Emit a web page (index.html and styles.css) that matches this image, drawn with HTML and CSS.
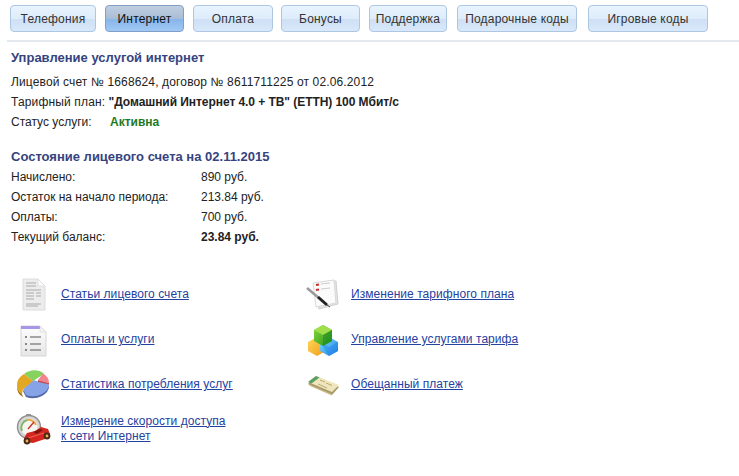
FILE: index.html
```html
<!DOCTYPE html>
<html lang="ru">
<head>
    <meta charset="UTF-8">
    <meta name="viewport" content="width=device-width, initial-scale=1.0">
    <title>Управление услугой интернет</title>
    <link rel="stylesheet" href="styles.css">
</head>
<body>
    <nav class="tabs">
        <a href="#" class="tab tab-phone">Телефония</a>
        <a href="#" class="tab tab-net active">Интернет</a>
        <a href="#" class="tab tab-pay">Оплата</a>
        <a href="#" class="tab tab-bonus">Бонусы</a>
        <a href="#" class="tab tab-help">Поддержка</a>
        <a href="#" class="tab tab-gift">Подарочные коды</a>
        <a href="#" class="tab tab-game">Игровые коды</a>
    </nav>

    <main class="content">
        <h1 class="title">Управление услугой интернет</h1>
        <p class="line line-account">Лицевой счет № 1668624, договор № 8611711225 от 02.06.2012</p>
        <p class="line"><span class="plan-label">Тарифный план:</span> <b class="plan-name">"Домашний Интернет 4.0 + ТВ" (ETTH) 100 Мбит/с</b></p>
        <p class="line status"><span class="status-label">Статус услуги:</span><b class="status-on">Активна</b></p>

        <h2 class="title title-balance">Состояние лицевого счета на 02.11.2015</h2>
        <dl class="balance">
            <dt>Начислено:</dt><dd>890 руб.</dd>
            <dt>Остаток на начало периода:</dt><dd>213.84 руб.</dd>
            <dt>Оплаты:</dt><dd>700 руб.</dd>
            <dt>Текущий баланс:</dt><dd><b>23.84 руб.</b></dd>
        </dl>
    </main>

    <div class="services">
        <div class="service">
            <svg class="icon" viewBox="0 0 36 36">
                <path d="M7 2h15l7 7v24H7z" fill="#ececec" stroke="#dcdcdc"/>
                <path d="M22 2l7 7h-7z" fill="#fafafa" stroke="#d8d8d8" stroke-width=".6"/>
                <path d="M10 6h10M10 9h10M10 13h15M10 16h8M20 16h5M10 19h8M20 19h5M10 22h8M10 27h15M10 29h12" stroke="#a9a9a9" stroke-width="1.2"/>
            </svg>
            <a href="#">Статьи лицевого счета</a>
        </div>
        <div class="service">
            <svg class="icon" viewBox="0 0 36 36">
                <defs>
                    <linearGradient id="sheet" x1="0" y1="0" x2="0" y2="1">
                        <stop offset="0" stop-color="#fdfdfd"/>
                        <stop offset="1" stop-color="#e6e6e6"/>
                    </linearGradient>
                </defs>
                <path d="M5 4h19l6 6v24H5z" fill="url(#sheet)" stroke="#d6d6d6"/>
                <path d="M5 4h19l2 3H5z" fill="#a995e6"/>
                <path d="M24 4l6 6h-6z" fill="#f4f4f4" stroke="#d0d0d0" stroke-width=".5"/>
                <path d="M9 15h2M9 22h2M9 28h2" stroke="#666" stroke-width="1.6"/>
                <path d="M14 15h11M14 22h11M14 28h11" stroke="#8b8b8b" stroke-width="1.3"/>
            </svg>
            <a href="#">Оплаты и услуги</a>
        </div>
        <div class="service">
            <svg class="icon" viewBox="0 0 36 36">
                <path d="M7 24L17 15l16 4q0 6-7 10-8 4-16 1z" fill="#5568a8"/>
                <path d="M7 22L17 13l16 4q0 6-7 10-8 4-16 1z" fill="#86a3e8"/>
                <path d="M17 14L8 7q6-4.500 13-3.500 5 .5 7 3.500z" fill="#86d25e"/>
                <path d="M17 14L8 7Q1 11 1 18q0 6 5 9l1-5z" fill="#e3a823"/>
                <path d="M1 18q0 6 5 9l1 3q-6-3-6-10z" fill="#a8730f"/>
                <path d="M22 13l5-6.500q6 3.500 6 9.500z" fill="#f2848f"/>
                <path d="M22 13l11 3v1.500L22 15z" fill="#c2505b"/>
            </svg>
            <a href="#">Статистика потребления услуг</a>
        </div>
        <div class="service service-two">
            <svg class="icon" viewBox="0 0 36 36">
                <rect x="10" y="3" width="5" height="3" fill="#999"/>
                <circle cx="13" cy="16" r="11.500" fill="#d5d5d5" stroke="#8e8e8e" stroke-width="1.4"/>
                <circle cx="13" cy="16" r="8.500" fill="#f8f6f0"/>
                <path d="M6 20a8 8 0 0 1 5-11" fill="none" stroke="#7fb86a" stroke-width="2"/>
                <path d="M11 9a8 8 0 0 1 9 5" fill="none" stroke="#e8a94c" stroke-width="2"/>
                <path d="M12 18l6-7" stroke="#c8332b" stroke-width="1.4"/>
                <path d="M8 27l3-5 8-2 6-4 7 2 2 5-5 5-12 4-7-1z" fill="#d4261f"/>
                <path d="M17 21l7-3 3 1-6 4z" fill="#7d1410"/>
                <path d="M12 27l16-5" stroke="#f0655c" stroke-width="1"/>
                <circle cx="11" cy="30" r="3.400" fill="#4a2a14"/>
                <circle cx="31" cy="25" r="3.400" fill="#4a2a14"/>
                <circle cx="11" cy="30" r="1.400" fill="#e5b15a"/>
                <circle cx="31" cy="25" r="1.400" fill="#e5b15a"/>
            </svg>
            <a href="#">Измерение скорости доступа<br>к сети Интернет</a>
        </div>
        <div class="service service-b">
            <svg class="icon" viewBox="0 0 36 36">
                <path d="M9 7l21-3 2 23-19 5z" fill="#e6e6e6" stroke="#cfcfcf"/>
                <path d="M7 6l21-3 2 23-20 4z" fill="#fbfbfb" stroke="#d8d8d8"/>
                <path d="M10 8l3-.5M10 13l3-.5" stroke="#c9302c" stroke-width="2"/>
                <path d="M15 7l9-1M15 12l9-1" stroke="#ccc" stroke-width="1"/>
                <path d="M1 11l19 16" stroke="#9a9a9a" stroke-width="2.600"/>
                <path d="M12 20l9 8" stroke="#222" stroke-width="2.800"/>
                <path d="M21 28l3 2" stroke="#444" stroke-width="1"/>
            </svg>
            <a href="#">Изменение тарифного плана</a>
        </div>
        <div class="service service-b">
            <svg class="icon" viewBox="0 0 36 36">
                <defs>
                    <linearGradient id="cube-g" x1="0" y1="0" x2="1" y2="1">
                        <stop offset="0" stop-color="#8fdc3a"/>
                        <stop offset="1" stop-color="#1f8f1c"/>
                    </linearGradient>
                    <linearGradient id="cube-y" x1="0" y1="0" x2="1" y2="1">
                        <stop offset="0" stop-color="#ffd95a"/>
                        <stop offset="1" stop-color="#f09a1a"/>
                    </linearGradient>
                    <linearGradient id="cube-b" x1="0" y1="0" x2="1" y2="1">
                        <stop offset="0" stop-color="#7fe4ff"/>
                        <stop offset="1" stop-color="#1c78e0"/>
                    </linearGradient>
                </defs>
                <path d="M2 20l9-5 9 5v9l-9 5-9-5z" fill="url(#cube-y)"/>
                <path d="M14 20l9-5 9 5v9l-9 5-9-5z" fill="url(#cube-b)"/>
                <path d="M14 20l9 5 9-5v9l-9 5z" fill="#1f86e8" opacity=".45"/>
                <path d="M8 8l9-5 9 5v11l-9 5-9-5z" fill="url(#cube-g)"/>
                <path d="M8 8l9 5 9-5-9-5z" fill="#9fe04a"/>
                <path d="M17 13v11l9-5V8z" fill="#1f8a20" opacity=".55"/>
            </svg>
            <a href="#">Управление услугами тарифа</a>
        </div>
        <div class="service service-b">
            <svg class="icon" viewBox="0 0 36 36">
                <path d="M2 17l8-7 23 10-7 8z" fill="#a8996a"/>
                <path d="M2 15l8-6 23 9-7 7z" fill="#efe6bd"/>
                <path d="M2 15l8-6 3.500 1.400-8 6z" fill="#5aa062"/>
                <path d="M14 13l5 2M20 16l6 2.500M12 17l9 4" stroke="#b8aa72" stroke-width="1"/>
                <path d="M2 17l24 10v1.500L4 19z" fill="#c9b983"/>
            </svg>
            <a href="#">Обещанный платеж</a>
        </div>
    </div>
</body>
</html>
```

FILE: styles.css
```css
body {
    font-family: 'Liberation Sans', Arial, sans-serif;
    font-size: 12px;
    color: #222;
    background-color: #fff;
    margin: 0;
    padding: 0;
}

.tabs {
    display: flex;
    padding: 5px 0 8px 3px;
    margin-left: 7px;
    border-bottom: 2px solid #e4e9f0;
}

.tab {
    box-sizing: border-box;
    height: 27px;
    line-height: 26px;
    text-align: center;
    text-decoration: none;
    font-size: 12px;
    letter-spacing: 0.2px;
    color: #333;
    border: 1px solid #adc6e2;
    border-radius: 4px;
    background: linear-gradient(to bottom, #e8f4fe 0%, #deecfb 50%, #cfe0f5 52%, #d9e8fa 100%);
}

.tab.active {
    color: #111;
    border-color: #7f9fc6;
    background: linear-gradient(to bottom, #c0cfe0 0%, #a8bdd6 50%, #87b5ea 52%, #a0c8f4 100%);
}

.tab-phone { width: 86px; margin-right: 9px; }
.tab-net { width: 79px; margin-right: 9px; }
.tab-pay { width: 80px; margin-right: 8px; }
.tab-bonus { width: 79px; margin-right: 9px; }
.tab-help { width: 78px; margin-right: 10px; }
.tab-gift { width: 120px; margin-right: 11px; }
.tab-game { width: 120px; }

.content {
    padding: 8px 0 0 11px;
}

.title {
    font-size: 13px;
    line-height: 15px;
    font-weight: bold;
    color: #35437e;
    margin: 0 0 7px;
}

.title-balance {
    margin: 17px 0 3px;
}

.line {
    margin: 0;
    line-height: 20px;
}

.line-account {
    letter-spacing: 0.14px;
}

.plan-label {
    letter-spacing: 0.15px;
}

.plan-name {
    letter-spacing: -0.06px;
}

.status-label {
    display: inline-block;
    width: 99px;
}

.status-on {
    color: #1f7a1f;
}

.balance {
    display: grid;
    grid-template-columns: 190px 1fr;
    grid-auto-rows: 20px;
    line-height: 20px;
    margin: 0;
}

.balance dd {
    margin: 0;
}

.services {
    display: grid;
    grid-template-columns: 290px 290px;
    grid-template-rows: repeat(4, 45px);
    grid-auto-flow: column;
    padding-left: 16px;
    margin-top: 25px;
}

.service {
    display: flex;
    align-items: center;
    gap: 9px;
    line-height: 15px;
    letter-spacing: 0.05px;
}

.service-two {
    padding-bottom: 2px;
}

.service a {
    color: #24429f;
}

.icon {
    width: 36px;
    height: 36px;
    flex: none;
}
```
